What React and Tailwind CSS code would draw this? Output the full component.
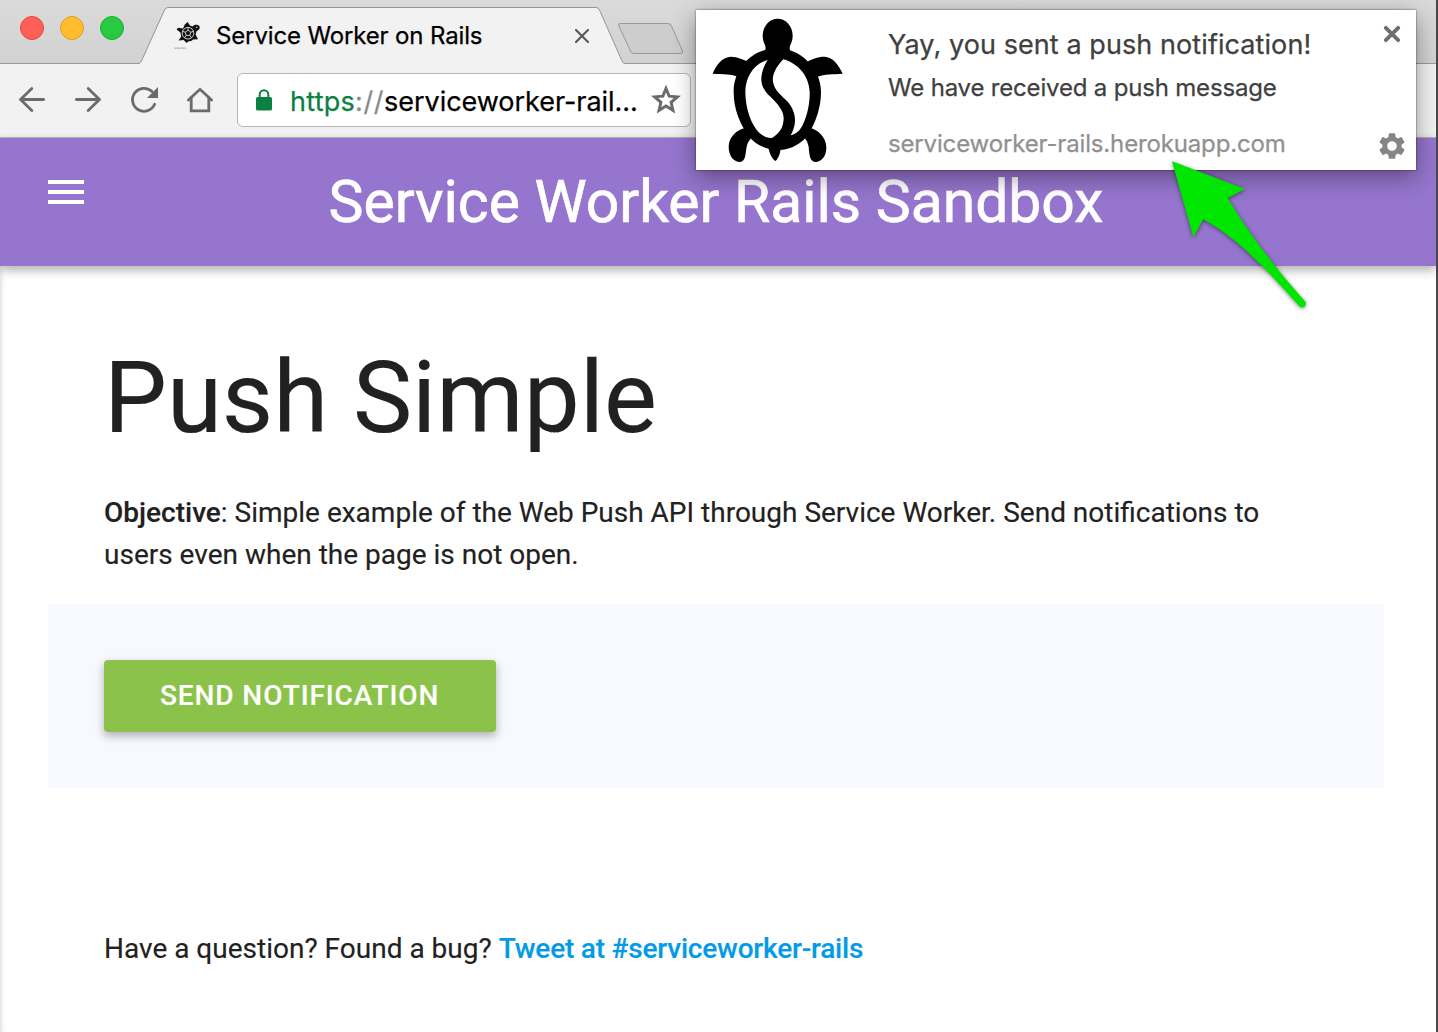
import { MdSettings } from "react-icons/md";

const sans = "font-['Inter','Liberation_Sans',sans-serif] [-webkit-text-stroke:0.25px]";

function Favicon() {
  return (
    <svg width="28" height="30" viewBox="0 0 28 30" className="shrink-0">
      <path d="M10.8 3.6 L13.6 1 L16 4.4 L18.6 5.6 C20 3.4 24.4 3.2 25.6 5.6 C26.2 8 24.4 9.8 22.6 10 L21.6 13.4 L24 18.2 L19 18.4 C17.6 20 16.6 20.2 14.6 20.2 L12.6 22 L9.6 19 L4.6 19.6 L7.2 15.4 L6.4 11.6 L2.6 8.4 L4 6.8 L9 7.6 Z" fill="#111" />
      <circle cx="14" cy="12.2" r="5.8" fill="none" stroke="#ddd" strokeWidth="0.9" />
      <path d="M14 9.2 L16.8 11.2 L15.8 14.4 L12.2 14.4 L11.2 11.2 Z M14 9.2 V6.4 M16.8 11.2 L19.4 10.4 M15.8 14.4 L17.4 16.8 M12.2 14.4 L10.6 16.8 M11.2 11.2 L8.6 10.4" fill="none" stroke="#ddd" strokeWidth="0.9" />
      <circle cx="22.8" cy="6.2" r="0.8" fill="#bbb" />
      <path d="M0.5 27.2 H12" stroke="#aaa" strokeWidth="1.2" strokeDasharray="2 .5" />
    </svg>
  );
}

function TabStrip() {
  return (
    <div className="flex h-16 shrink-0 items-start bg-linear-to-b from-[#dadada] to-[#d2d2d2] shadow-[inset_0_-1px_0_#999]">
      <div className="flex w-[139px] gap-4 pt-4 pl-5">
        <span className="size-6 rounded-full border border-[#e2463f] bg-[#ff5f57]" />
        <span className="size-6 rounded-full border border-[#dfa023] bg-[#ffbd2e]" />
        <span className="size-6 rounded-full border border-[#1dad2b] bg-[#28ca42]" />
      </div>
      <div className="relative h-16 w-[486px]">
        <svg className="absolute inset-0" width="486" height="64" viewBox="0 0 486 64">
          <path d="M0 64 V63.5 Q1.500 63 2.500 61 L25.500 10 Q26.500 7.500 29 7.500 H457 Q459.500 7.500 460.500 10 L483 61 Q484 63.500 486 63.500 V64 Z" fill="#f2f2f2" />
          <path d="M0 63.500 Q1.500 63 2.500 61 L25.500 10 Q26.500 7.500 29 7.500 H457 Q459.500 7.500 460.500 10 L483 61 Q484 63.500 486 63.500" fill="none" stroke="#959595" />
        </svg>
        <div className="relative flex h-16 items-center pt-[7px] pl-[35px]">
          <Favicon />
          <span className={`${sans} ml-[14px] w-[357px] text-2xl tracking-[-0.14px] whitespace-nowrap text-black`}>Service Worker on Rails</span>
          <svg className="absolute top-[29px] left-[436px]" width="14" height="14" viewBox="0 0 14 14">
            <path d="M1 1 L13 13 M13 1 L1 13" stroke="#5a5a5a" strokeWidth="2.2" strokeLinecap="round" />
          </svg>
        </div>
      </div>
      <svg className="mt-[22px] -ml-2" width="68" height="34" viewBox="0 0 68 34">
        <path d="M3 1.500 H51 Q53.500 1.500 54.500 4 L65.500 29 Q66.500 31.500 64 31.500 H17 Q14.500 31.500 13.500 29 L1.800 4 Q1 1.500 3 1.500 Z" fill="#cdcdcd" stroke="#999" />
      </svg>
    </div>
  );
}

const navIcons = [
  <path key="back" d="M43.600 31.500 H20.500 M31.800 20.400 L20.500 31.500 L31.800 42.600" />,
  <path key="forward" d="M20.400 31.500 H43.500 M32.200 20.400 L43.500 31.500 L32.200 42.600" />,
  <g key="reload">
    <path d="M40 23.500 A11.500 11.500 0 1 0 42.600 36.300" />
    <path d="M46 19 V30 H35 Z" fill="#6b6b6b" stroke="none" />
  </g>,
  <g key="home" strokeLinejoin="miter">
    <path d="M20.400 32 L32 21.300 L43.600 32" />
    <path d="M23.200 30 V42.800 H40.800 V30" />
  </g>,
];

function Toolbar() {
  return (
    <div className="flex h-[74px] shrink-0 items-start border-b border-[#b9b9b9] bg-[#f2f2f2]">
      <div className="flex">
        {navIcons.map((icon, i) => (
          <svg key={i} width="56" height="64" viewBox="0 -4 56 64" fill="none" stroke="#6b6b6b" strokeWidth="2.8" strokeLinecap="round" strokeLinejoin="round">
            {icon}
          </svg>
        ))}
      </div>
      <div className="mt-[9px] ml-[13px] flex h-[54px] w-[454px] items-center rounded-md border border-[#b5b5b5] bg-white">
        <svg className="ml-[18px] shrink-0" width="16" height="22" viewBox="0 0 16 22">
          <path d="M3.700 9 V5.500 A4.300 4.300 0 0 1 12.300 5.500 V9" fill="none" stroke="#0b8043" strokeWidth="2" />
          <rect y="8" width="16" height="13.500" rx="1.600" fill="#0b8043" />
        </svg>
        <span className={`${sans} ml-[18px] w-[359px] pt-1 text-[27px] leading-[50px] whitespace-nowrap text-black`}>
          <span className="tracking-[0.25px] text-[#0b8043]">https</span>
          <span className="tracking-[0.6px] text-[#8a8a8a]">://</span>
          <span className="tracking-[-0.04px]">serviceworker-rail...</span>
        </span>
        <svg className="shrink-0" width="34" height="34" viewBox="0 0 24 24">
          <path d="M12 3.900 L14.200 9.300 L20 9.800 L15.600 13.600 L16.900 19.300 L12 16.300 L7.100 19.300 L8.400 13.600 L4 9.800 L9.800 9.300 Z" fill="none" stroke="#6b6b6b" strokeWidth="2.100" />
        </svg>
      </div>
    </div>
  );
}

function Turtle() {
  return (
    <svg width="192" height="160" viewBox="0 30 576 480" className="shrink-0">
      <ellipse cx="245" cy="107" rx="45" ry="51" />
      <path d="M203 120 C208 138 212 146 205 156 H285 C278 146 282 138 287 120 Z" />
      <path d="M245 145 C312 145 375 205 375 275 C375 340 345 392 332 410 C305 440 275 450 240 450 C205 448 175 430 160 410 C130 370 113 325 113 275 C113 205 168 145 245 145 Z" />
      <path d="M50 221 C60 195 80 170 105 170 C125 170 145 180 155 185 L125 230 C110 222 80 223 50 221 Z M440 221 C428 195 410 170 385 170 C365 170 345 178 335 185 L365 230 C385 222 410 223 440 221 Z" />
      <path d="M148 384 C125 388 98 410 98 440 C98 470 115 486 132 486 C150 484 148 460 152 440 C155 428 158 422 165 416 Z M342 384 C365 388 391 412 391 442 C391 468 378 486 358 486 C340 484 340 460 338 440 C335 428 332 420 326 414 Z" />
      <path d="M217 444 L254 446 C252 465 243 480 238 483 C230 478 222 465 217 444 Z" />
      <path d="M215 180 C175 190 148 230 148 275 C148 330 168 375 188 397 C198 407 214 415 228 414 C250 400 262 385 263 355 C263 332 245 312 225 292 C205 275 195 255 196 235 C197 215 205 195 215 180 Z" fill="#fff" />
      <path d="M262 178 C240 200 228 225 231 245 C235 270 255 285 270 300 C288 318 298 340 297 365 C296 380 290 395 284 406 C300 402 312 392 320 375 C335 345 342 305 341 275 C338 225 305 190 262 178 Z" fill="#fff" />
    </svg>
  );
}

function Notification() {
  return (
    <div className={`${sans} absolute top-[10px] left-[696px] flex h-40 w-[720px] bg-white shadow-[0_0_2px_rgba(0,0,0,0.6),0_7px_22px_rgba(0,0,0,0.38)]`}>
      <Turtle />
      <div className="w-[480px] whitespace-nowrap">
        <p className="mt-[15px] text-[27px] leading-10 tracking-[0.08px] text-[#404040]">Yay, you sent a push notification!</p>
        <p className="mt-[3px] text-2xl leading-10 tracking-[-0.18px] text-[#404040]">We have received a push message</p>
        <p className="mt-4 text-2xl leading-10 tracking-[-0.15px] text-[#909090]">serviceworker-rails.herokuapp.com</p>
      </div>
      <div className="flex w-12 flex-col items-center justify-between pt-[15px] pb-2">
        <svg width="18" height="18" viewBox="0 0 18 18">
          <path d="M2.800 2.800 L15.200 15.200 M15.200 2.800 L2.800 15.200" stroke="#6e6e6e" strokeWidth="3.800" strokeLinecap="round" />
        </svg>
        <MdSettings className="size-8 text-[#858585]" />
      </div>
    </div>
  );
}

function PointerArrow() {
  return (
    <svg className="absolute top-[150px] left-[1160px] drop-shadow-[0_1px_2px_rgba(0,0,0,0.5)]" width="160" height="170" viewBox="60 90 480 510">
      <path d="M96 124 L315 207 L263 234 C325 340 420 460 497 546 C500 558 490 566 480 560 C385 455 300 360 190 298 L160 352 Z" fill="#00e600" />
    </svg>
  );
}

function Page() {
  return (
    <div className="flex flex-1 flex-col bg-white font-['Roboto',sans-serif] text-[28px] leading-[42px] text-[#212121] shadow-[inset_5px_0_5px_-4px_rgba(0,0,0,0.16)] [-webkit-text-stroke:0.15px]">
      <header className="flex h-32 shrink-0 items-center bg-[#9575cd] shadow-[0_4px_10px_rgba(0,0,0,0.32)]">
        <div className="mb-5 ml-12 flex w-9 flex-col gap-1.5">
          <span className="h-1 bg-white" />
          <span className="h-1 bg-white" />
          <span className="h-1 bg-white" />
        </div>
        <h1 className="mr-[88px] flex-1 text-center text-[58.8px] leading-[126px] whitespace-nowrap text-white [-webkit-text-stroke:0.7px]">Service Worker Rails Sandbox</h1>
      </header>
      <main className="px-12 pt-[77px]">
        <section className="px-14">
          <h2 className="text-[99.7px] leading-[110px]">Push Simple</h2>
          <p className="mt-[39px] whitespace-nowrap">
            <strong className="font-medium">Objective</strong>: Simple example of the Web Push API through Service Worker. Send notifications to
            <br />
            users even when the page is not open.
          </p>
        </section>
        <section className="mt-7 mr-1 h-[184px] bg-[#f8f9ff] p-14">
          <button className="h-[72px] w-[392px] rounded-[4px] bg-[#8bc34a] pl-14 text-left font-medium tracking-[0.9px] text-white shadow-[0_4px_10px_rgba(0,0,0,0.3)]">SEND NOTIFICATION</button>
        </section>
        <p className="mt-[140px] ml-14">
          Have a question? Found a bug? <a className="font-medium tracking-[-0.2px] text-[#039be5]">Tweet at #serviceworker-rails</a>
        </p>
      </main>
    </div>
  );
}

export default function App() {
  return (
    <div className="relative flex h-[1032px] w-[1438px] flex-col overflow-hidden border-r-2 border-[#484848]">
      <TabStrip />
      <Toolbar />
      <Page />
      <Notification />
      <PointerArrow />
    </div>
  );
}
